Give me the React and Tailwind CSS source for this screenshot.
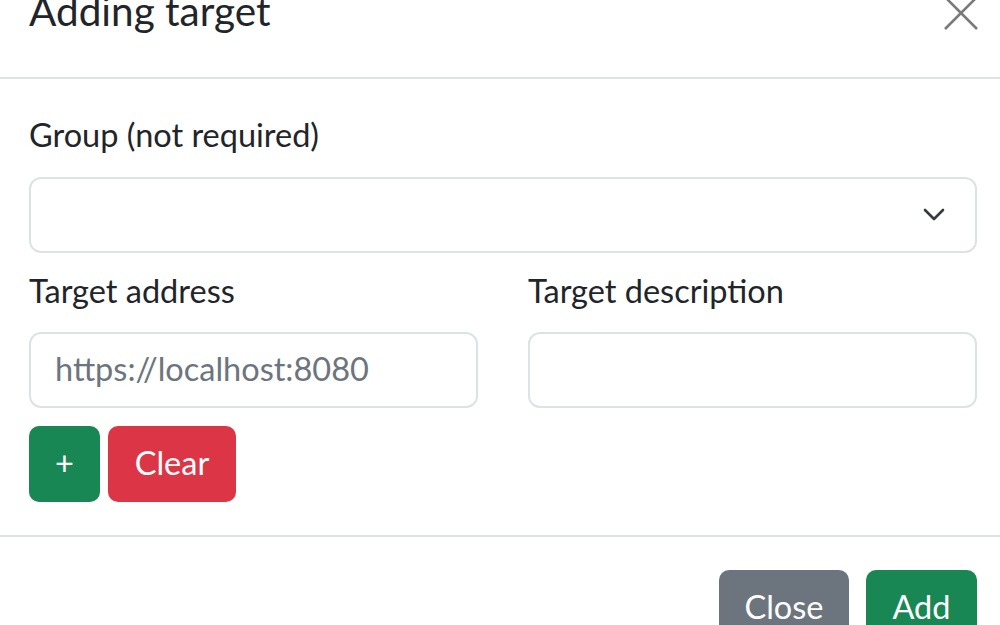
export default function App() {
  return (
    <div className="h-[625px] overflow-hidden bg-white font-['Lato',sans-serif] text-[#212529]">
      <div className="-mt-[11px] flex h-[90px] items-start justify-between border-b-2 border-[#dee2e6] pl-[29px] pr-[22px]">
        <h5 className="-mt-[2px] text-[40.5px] leading-[1.2]">Adding target</h5>
        <button className="mt-[7px] flex h-[34px] w-[34px] items-center justify-center">
          <svg width="34" height="34" viewBox="0 0 34 34" fill="none" stroke="#7a7a7a" strokeWidth="2.6">
            <path d="M1 1 33 33M33 1 1 33" />
          </svg>
        </button>
      </div>

      <div className="border-b-2 border-[#dee2e6] pt-[32px] pb-[33px] pl-[29px] pr-[23px]">
        <label className="block text-[32.5px] leading-[1.5]">Group (not required)</label>
        <div className="mt-[17px] flex h-[76px] items-center justify-end rounded-[12px] border-2 border-[#dee2e6] pr-[30px]">
          <svg width="22" height="14" viewBox="0 0 22 14" fill="none" stroke="#343a40" strokeWidth="2.6" strokeLinecap="round" strokeLinejoin="round">
            <path d="M2 2l9 9 9-9" />
          </svg>
        </div>

        <div className="mt-[14px] grid grid-cols-2 gap-x-[50px]">
          <Field label="Target address" placeholder="https://localhost:8080" />
          <Field label="Target description" />
        </div>

        <div className="mt-[18px] flex gap-[8px]">
          <button className="h-[76px] w-[71px] rounded-[10px] bg-[#198754] text-[32.5px] text-white">+</button>
          <button className="h-[76px] w-[128px] rounded-[10px] bg-[#dc3545] text-[32.5px] text-white">Clear</button>
        </div>
      </div>

      <div className="flex justify-end gap-[17px] pt-[33px] pr-[23px]">
        <button className="h-[76px] w-[130px] rounded-[10px] bg-[#6c757d] text-[32.5px] text-white">Close</button>
        <button className="h-[76px] w-[111px] rounded-[10px] bg-[#198754] text-[32.5px] text-white">Add</button>
      </div>
    </div>
  );
}

function Field({ label, placeholder }) {
  return (
    <div>
      <label className="block text-[32.5px] leading-[1.5]">{label}</label>
      <div className="mt-[16px] flex h-[76px] items-center rounded-[12px] border-2 border-[#dee2e6] px-[24px] text-[32.5px] text-[#6c757d]">
        {placeholder}
      </div>
    </div>
  );
}
